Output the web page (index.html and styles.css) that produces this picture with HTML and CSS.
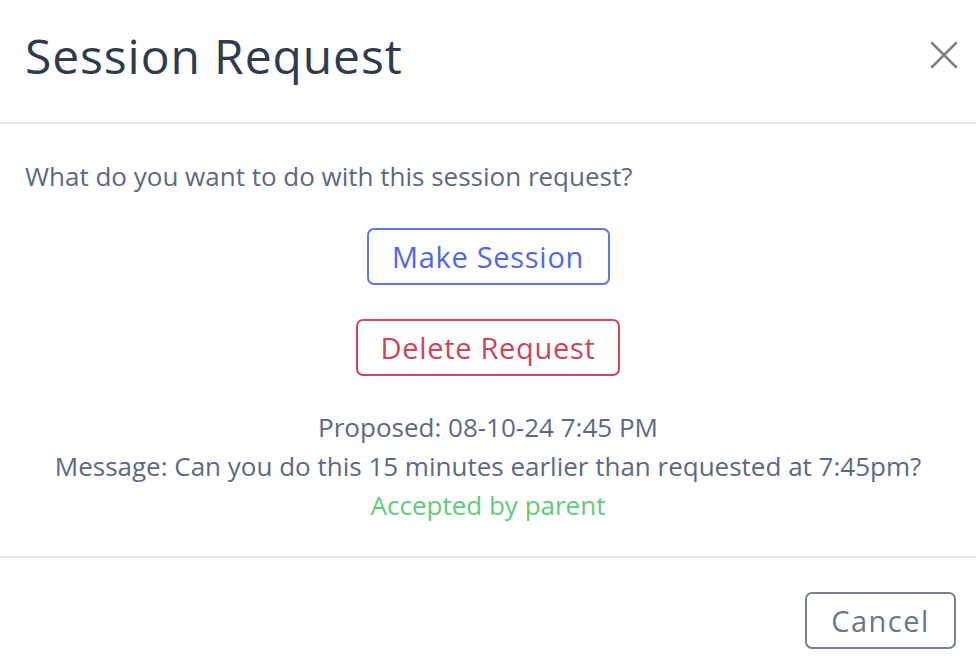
FILE: index.html
```html
<!DOCTYPE html>
<html lang="en">
<head>
<meta charset="utf-8">
<title>Session Request</title>
<link rel="stylesheet" href="styles.css">
</head>
<body>
<div class="modal">
  <header class="modal-header">
    <h1 class="modal-title">Session Request</h1>
    <button class="close-btn" aria-label="Close">
      <svg width="28" height="28" viewBox="0 0 28 28"><path d="M2 2 L26 26 M26 2 L2 26" stroke="#808080" stroke-width="2.6" stroke-linecap="round" fill="none"/></svg>
    </button>
  </header>
  <section class="modal-body">
    <p class="question">What do you want to do with this session request?</p>
    <div class="actions">
      <button class="btn btn-primary">Make Session</button>
      <button class="btn btn-danger">Delete Request</button>
    </div>
    <div class="details">
      <p>Proposed: 08-10-24 7:45 PM</p>
      <p>Message: Can you do this 15 minutes earlier than requested at 7:45pm?</p>
      <p class="accepted">Accepted by parent</p>
    </div>
  </section>
  <footer class="modal-footer">
    <button class="btn btn-secondary">Cancel</button>
  </footer>
</div>
</body>
</html>
```
FILE: styles.css
```css
html, body {
  margin: 0;
  padding: 0;
  background: #ffffff;
}
body {
  font-family: "Open Sans", "Noto Sans", sans-serif;
  color: #5b6a82;
}
.modal {
  width: 976px;
  height: 666px;
  display: flex;
  flex-direction: column;
  background: #fff;
}
.modal-header {
  height: 124px;
  box-sizing: border-box;
  display: flex;
  align-items: center;
  justify-content: space-between;
  padding: 0 18px 12px 25px;
  border-bottom: 2px solid #dfe6ee;
}
.modal-title {
  margin: 0;
  font-family: "Open Sans", sans-serif;
  font-weight: 500;
  font-size: 48px;
  color: #303b4d;
  letter-spacing: 0.9px;
}
.close-btn {
  background: none;
  border: none;
  padding: 0;
  width: 28px;
  height: 28px;
  display: flex;
  cursor: pointer;
}
.modal-body {
  height: 434px;
  box-sizing: border-box;
  border-bottom: 2px solid #dfe6ee;
  padding: 33px 25px 0;
}
.question {
  margin: 0;
  font-size: 26px;
  line-height: 38px;
}
.actions {
  display: flex;
  flex-direction: column;
  align-items: center;
  gap: 34px;
  margin-top: 33px;
}
.btn {
  font-family: "Open Sans", sans-serif;
  font-weight: 500;
  font-size: 29px;
  letter-spacing: 0.7px;
  height: 57px;
  background: #fff;
  border-radius: 7px;
  border: 2px solid;
  padding: 0 20px;
  cursor: pointer;
}
.btn-primary {
  color: #5067ec;
  border-color: #5e76ee;
  width: 243px;
}
.btn-danger {
  color: #cf4458;
  border-color: #d0485c;
  width: 264px;
}
.btn-secondary {
  color: #6c7689;
  border-color: #77818f;
  width: 151px;
  letter-spacing: 1.5px;
}
.details {
  margin-top: 32px;
  text-align: center;
  font-size: 26px;
  line-height: 39px;
}
.details p {
  margin: 0;
}
.accepted {
  color: #5fcc7a;
}
.modal-footer {
  flex: 1;
  display: flex;
  justify-content: flex-end;
  align-items: flex-start;
  padding: 34px 20px 0 0;
}
```
